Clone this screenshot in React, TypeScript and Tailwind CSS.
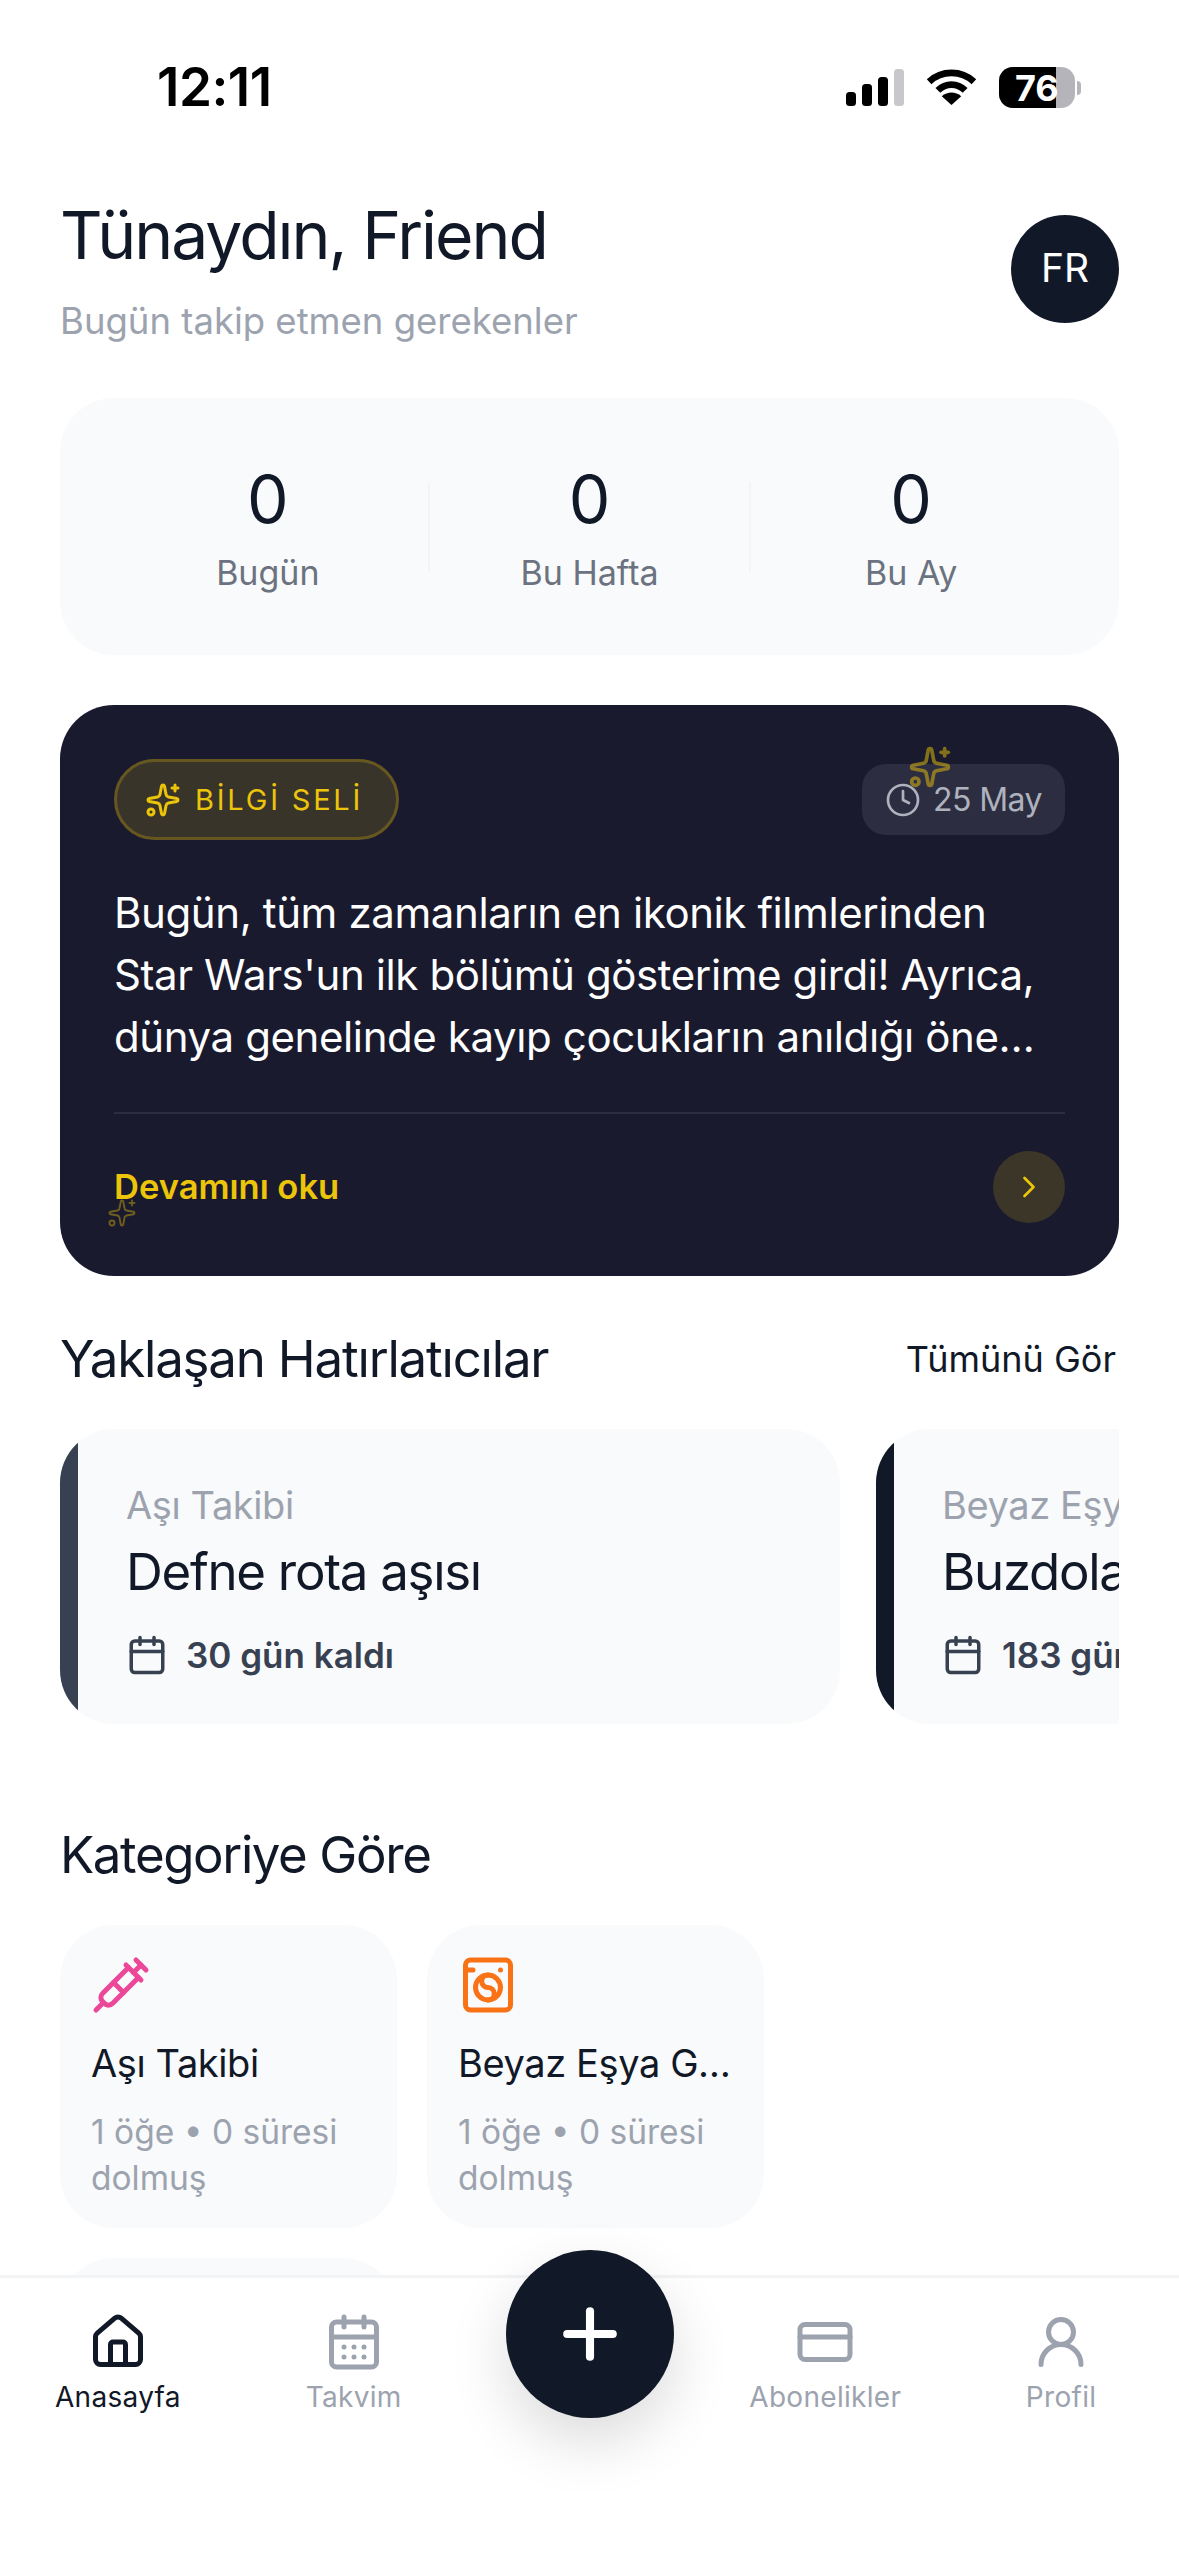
import React from 'react';
import {
  Calendar,
  CalendarDays,
  ChevronRight,
  Clock,
  CreditCard,
  House,
  Plus,
  Sparkles,
  Syringe,
  UserRound,
  WashingMachine,
} from 'lucide-react';

const stats = [
  { value: '0', label: 'Bugün' },
  { value: '0', label: 'Bu Hafta' },
  { value: '0', label: 'Bu Ay' },
];

const StatusBar = () => (
  <div className="relative flex h-[150px] shrink-0 items-start justify-between pl-[157px] pr-[98px] pt-[56px]">
    <span className="text-[53px] font-semibold leading-[62px] tracking-[-0.5px] text-black">12:11</span>
    <div className="flex items-center gap-[22px] pt-[11px]">
      <svg width="58" height="37" viewBox="0 0 58 37">
        <rect x="0" y="23" width="10" height="14" rx="3.5" fill="#000" />
        <rect x="16" y="15" width="10" height="22" rx="3.5" fill="#000" />
        <rect x="32" y="8" width="10" height="29" rx="3.5" fill="#000" />
        <rect x="48" y="0" width="10" height="37" rx="3.5" fill="#c7c7cc" />
      </svg>
      <svg width="51" height="37" viewBox="0 0 52 38" fill="none">
        <path d="M3 13 C16 1 36 1 49 13" stroke="#000" strokeWidth="7" />
        <path d="M12 22 C20 14 32 14 40 22" stroke="#000" strokeWidth="7" />
        <path d="M26 37 L16 28 C22 23 30 23 36 28 Z" fill="#000" />
      </svg>
      <div className="flex items-center gap-[2px]">
        <div className="relative flex h-[41px] w-[76px] overflow-hidden rounded-[14px] bg-[#b4b4ba]">
          <div className="h-full w-[57px] bg-black" />
          <span className="absolute inset-y-0 left-[16px] flex items-center text-[36px] font-bold leading-none text-white">
            76
          </span>
        </div>
        <div className="h-[14px] w-[4px] rounded-r-full bg-[#b4b4ba]" />
      </div>
    </div>
  </div>
);

const Header = () => (
  <div className="flex items-center justify-between pt-[42px]">
    <div>
      <h1 className="text-[66px] font-normal leading-[86px] tracking-[-2px] text-[#111827]">Tünaydın, Friend</h1>
      <p className="mt-[19px] text-[36.5px] leading-[48px] text-[#9ca3af]">Bugün takip etmen gerekenler</p>
    </div>
    <div className="flex h-[108px] w-[108px] items-center justify-center rounded-full bg-[#111827] text-[39px] text-white">
      FR
    </div>
  </div>
);

const StatsCard = () => (
  <div className="mt-[53px] flex h-[257px] items-center rounded-[54px] bg-[#f9fafb] px-[48px]">
    {stats.map((item, i) => (
      <React.Fragment key={item.label}>
        {i > 0 && <div className="h-[90px] w-[2px] bg-[#f3f4f6]" />}
        <div className="flex flex-1 flex-col items-center">
          <span className="text-[66px] leading-[80px] text-[#111827]">{item.value}</span>
          <span className="mt-[12px] text-[34px] leading-[44px] text-[#6b7280]">{item.label}</span>
        </div>
      </React.Fragment>
    ))}
  </div>
);

const InsightCard = () => (
  <div className="relative mt-[50px] h-[571px] rounded-[54px] bg-[#1a1a2e] p-[54px]">
    <div className="flex items-center justify-between">
      <div className="flex h-[81px] w-[285px] items-center gap-[14px] rounded-full border-[3px] border-[#665720] bg-[#39342a] pl-[28px]">
        <Sparkles size={36} color="#ecc50a" strokeWidth={2} />
        <span className="whitespace-nowrap text-[29px] font-normal tracking-[2.8px] text-[#ecc50a]">BİLGİ SELİ</span>
      </div>
      <div className="flex h-[71px] w-[203px] items-center justify-center gap-[12px] rounded-[24px] bg-[#2d2d41]">
        <Clock size={36} color="#adb2bd" strokeWidth={1.8} />
        <span className="text-[32px] leading-none tracking-[-0.6px] text-[#adb2bd]">25 May</span>
      </div>
    </div>
    <Sparkles size={44} color="#ecc50a" className="absolute left-[848px] top-[40px] opacity-50" />
    <p className="mt-[42px] text-[42px] leading-[62px] tracking-[-0.4px] text-white">
      Bugün, tüm zamanların en ikonik filmlerinden
      <br />
      Star Wars'un ilk bölümü gösterime girdi! Ayrıca,
      <br />
      dünya genelinde kayıp çocukların anıldığı öne…
    </p>
    <div className="mt-[44px] h-[2px] bg-[#2d2d41]" />
    <div className="mt-[37px] flex items-center justify-between">
      <span className="text-[34.5px] font-semibold text-[#ecc50a]">Devamını oku</span>
      <div className="flex h-[72px] w-[72px] items-center justify-center rounded-full bg-[#3c3628]">
        <ChevronRight size={36} color="#ecc50a" strokeWidth={1.8} />
      </div>
    </div>
    <Sparkles size={30} color="#ecc50a" strokeWidth={1.5} className="absolute left-[47px] top-[493px] opacity-40" />
  </div>
);

const ReminderCard = ({
  category,
  title,
  days,
  stripe,
}: {
  category: string;
  title: string;
  days: string;
  stripe: string;
}) => (
  <div className="flex h-[295px] w-[780px] shrink-0 overflow-hidden rounded-[54px] bg-[#f9fafb]">
    <div className={`w-[18px] shrink-0 ${stripe}`} />
    <div className="whitespace-nowrap pl-[48px] pt-[50px]">
      <p className="text-[38px] leading-[52px] tracking-[-0.4px] text-[#9ca3af]">{category}</p>
      <p className="mt-[8px] text-[51px] leading-[66px] tracking-[-1.3px] text-[#111827]">{title}</p>
      <div className="mt-[26px] flex items-center gap-[18px]">
        <Calendar size={42} color="#374151" />
        <span className="text-[35px] font-semibold leading-[48px] text-[#374151]">{days}</span>
      </div>
    </div>
  </div>
);

const Reminders = () => (
  <div className="mt-[50px]">
    <div className="flex items-center justify-between pr-[3px]">
      <h2 className="text-[51px] leading-[66px] tracking-[-1.2px] text-[#111827]">Yaklaşan Hatırlatıcılar</h2>
      <span className="text-[36px] leading-[48px] text-[#111827]">Tümünü Gör</span>
    </div>
    <div className="mt-[37px] flex gap-[36px] overflow-hidden">
      <ReminderCard category="Aşı Takibi" title="Defne rota aşısı" days="30 gün kaldı" stripe="bg-[#374151]" />
      <ReminderCard category="Beyaz Eşya Garantisi" title="Buzdolabı garantisi" days="183 gün kaldı" stripe="bg-[#111827]" />
    </div>
  </div>
);

const CategoryCard = ({ icon, name }: { icon: React.ReactNode; name: string }) => (
  <div className="h-[303px] rounded-[54px] bg-[#f9fafb] pl-[31px] pr-[24px] pt-[30px]">
    {icon}
    <p className="mt-[22px] whitespace-nowrap text-[38px] leading-[52px] tracking-[-0.4px] text-[#111827]">{name}</p>
    <p className="mt-[20px] text-[33.5px] leading-[46px] text-[#9ca3af]">1 öğe • 0 süresi dolmuş</p>
  </div>
);

const Categories = () => (
  <div className="mt-[98px]">
    <h2 className="text-[51px] leading-[66px] tracking-[-1.4px] text-[#111827]">Kategoriye Göre</h2>
    <div className="mt-[37px] grid grid-cols-[337px_337px] gap-[30px]">
      <CategoryCard icon={<Syringe size={60} color="#ec4899" />} name="Aşı Takibi" />
      <CategoryCard icon={<WashingMachine size={60} color="#f97316" />} name="Beyaz Eşya G…" />
      <div className="h-[303px] rounded-[54px] bg-[#f9fafb]" />
    </div>
  </div>
);

const NavItem = ({ icon, label, active }: { icon: React.ReactNode; label: string; active?: boolean }) => (
  <div className="flex flex-col items-center">
    {icon}
    <span className={`mt-[5px] text-[28px] leading-[40px] tracking-[0.3px] ${active ? 'text-[#111827]' : 'text-[#9ca3af]'}`}>
      {label}
    </span>
  </div>
);

const BottomNav = () => (
  <div className="relative grid h-[281px] shrink-0 grid-cols-5 border-t-[3px] border-[#f3f4f6] bg-white pt-[34px]">
    <NavItem icon={<House size={60} color="#111827" />} label="Anasayfa" active />
    <NavItem icon={<CalendarDays size={60} color="#9ca3af" />} label="Takvim" />
    <div />
    <NavItem icon={<CreditCard size={60} color="#9ca3af" />} label="Abonelikler" />
    <NavItem icon={<UserRound size={60} color="#9ca3af" />} label="Profil" />
    <div className="absolute left-[506px] top-[-28px] flex h-[168px] w-[168px] items-center justify-center rounded-full bg-[#111827] shadow-[0_24px_60px_rgba(0,0,0,0.14)]">
      <Plus size={78} color="#ffffff" strokeWidth={2.5} />
    </div>
  </div>
);

export default function App() {
  return (
    <div className="flex h-[2556px] w-[1179px] flex-col overflow-hidden bg-white font-['Inter',sans-serif]">
      <StatusBar />
      <div className="min-h-0 flex-1 overflow-hidden px-[60px]">
        <Header />
        <StatsCard />
        <InsightCard />
        <Reminders />
        <Categories />
      </div>
      <BottomNav />
    </div>
  );
}
